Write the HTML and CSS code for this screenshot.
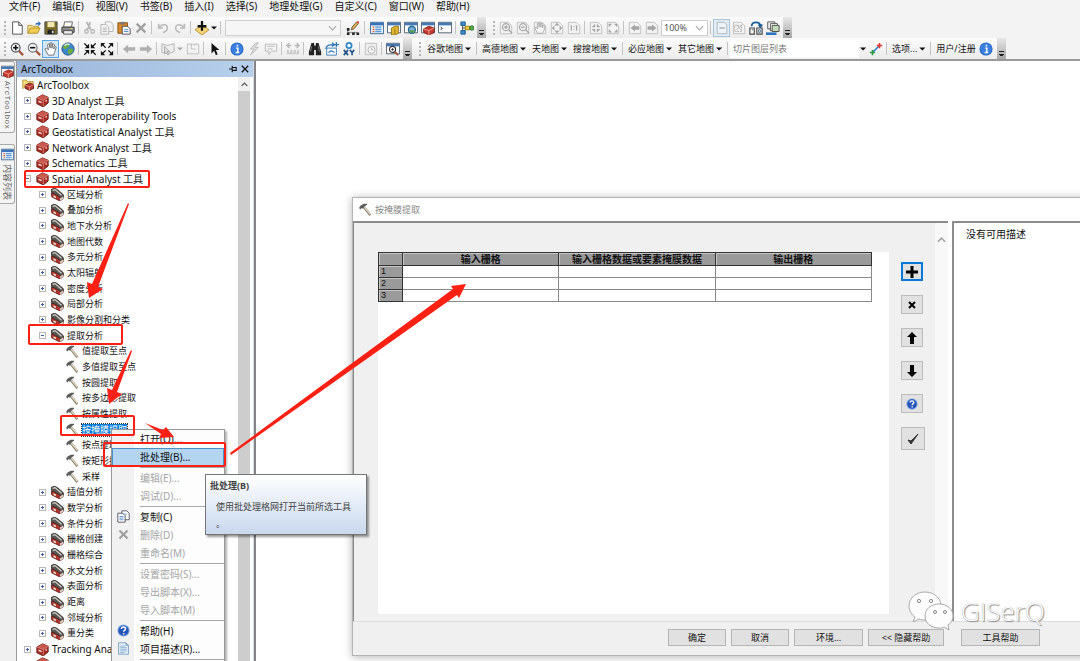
FILE: index.html
```html
<!DOCTYPE html>
<html lang="zh-CN">
<head>
<meta charset="utf-8">
<title>ArcMap</title>
<link rel="stylesheet" href="styles.css">
</head>
<body>
<svg class="defs" aria-hidden="true">
  <defs>
    <symbol id="i-new" viewBox="0 0 16 16"><path d="M3 1h7l4 4v10H3z" fill="#fff" stroke="#444"/><path d="M10 1v4h4" fill="#ddd" stroke="#444"/></symbol>
    <symbol id="i-open" viewBox="0 0 16 16"><path d="M1 14V5h5l1 1h6v3" fill="#f7e29a" stroke="#b08a1e"/><path d="M1 14l3-6h11l-3 6z" fill="#f2cc55" stroke="#b08a1e"/><path d="M9 4c1-2 3-2 4-2V0l3 3-3 3V4z" fill="#2f6fb8"/></symbol>
    <symbol id="i-save" viewBox="0 0 16 16"><path d="M1 1h14v14H1z" fill="#7a6c28" stroke="#444"/><path d="M4 1h8v6H4z" fill="#f0e7b0"/><path d="M4 10h8v5H4z" fill="#222"/><path d="M9 11h2v3H9z" fill="#ddd"/></symbol>
    <symbol id="i-print" viewBox="0 0 16 16"><path d="M4 1h9l-1 6H3z" fill="#fff" stroke="#555"/><path d="M1 7h14v6H1z" fill="#8d8d8d" stroke="#333"/><path d="M3 11h10v4H3z" fill="#eee" stroke="#444"/><path d="M11 8h2v1h-2z" fill="#ff4"/></symbol>
    <symbol id="i-cut" viewBox="0 0 16 16"><path d="M4 1l5 9M8 1L7 7 4 10" fill="none" stroke="#b5b5b5" stroke-width="2"/><circle cx="4" cy="12" r="2" fill="none" stroke="#b5b5b5" stroke-width="1.5"/><circle cx="11" cy="12" r="2" fill="none" stroke="#b5b5b5" stroke-width="1.5"/></symbol>
    <symbol id="i-copy" viewBox="0 0 16 16"><path d="M6 1h6l3 3v8H6z" fill="#f4f4f4" stroke="#b0b0b0"/><path d="M1 4h6l3 3v8H1z" fill="#f4f4f4" stroke="#b0b0b0"/><path d="M3 8h5M3 10h5M3 12h5" stroke="#b5b5b5"/></symbol>
    <symbol id="i-copyc" viewBox="0 0 16 16"><path d="M6 1h6l3 3v8H6z" fill="#fff" stroke="#445"/><path d="M1 4h6l3 3v8H1z" fill="#fff" stroke="#445"/><path d="M3 8h5M3 10h5M3 12h5M8 5h4" stroke="#4b86c4"/></symbol>
    <symbol id="i-paste" viewBox="0 0 16 16"><path d="M1 2h11v12H1z" fill="#d98b2b" stroke="#7a4b12"/><path d="M4 1h5v3H4z" fill="#777"/><path d="M6 6h6l3 3v6H6z" fill="#fff" stroke="#445"/><path d="M8 10h5M8 12h5" stroke="#4b86c4"/></symbol>
    <symbol id="i-x" viewBox="0 0 16 16"><path d="M3 3l10 10M13 3L3 13" stroke="#9f9f9f" stroke-width="2.6"/></symbol>
    <symbol id="i-undo" viewBox="0 0 16 16"><path d="M3 3v5h5M3 8c3-5 10-5 10 0 0 3-3 5-5 5" fill="none" stroke="#bbb" stroke-width="1.8"/></symbol>
    <symbol id="i-redo" viewBox="0 0 16 16"><path d="M13 3v5H8M13 8C10 3 3 3 3 8c0 3 3 5 5 5" fill="none" stroke="#bbb" stroke-width="1.8"/></symbol>
    <symbol id="i-add" viewBox="0 0 16 16"><path d="M8 5l8 5-8 6-8-6z" fill="#f6d57a" stroke="#b78a2c"/><path d="M8 0v11M3 6h10" stroke="#111" stroke-width="2.6"/></symbol>
    <symbol id="i-edit" viewBox="0 0 16 16"><path d="M2 9v4h11" fill="none" stroke="#777"/><path d="M1 8h3v3H1zM1 13h3v3H1zM7 13h3v3H7zM12 13h3v3h-3z" fill="#222"/><path d="M6 10l1-3 5-6 2 2-5 6z" fill="#e9b052" stroke="#553"/><path d="M12 1l2 2 1-2-1-1z" fill="#d33"/></symbol>
    <symbol id="w-frame" viewBox="0 0 16 16"><path d="M.5 1.500h15v12H.5z" fill="#fff" stroke="#456"/><path d="M1 2h14v3H1z" fill="#4479b8"/></symbol>
    <symbol id="i-toc" viewBox="0 0 16 16"><path d="M.5 1.500h15v13H.5z" fill="#e6f1fb" stroke="#2c5c90"/><path d="M1 2h14v3H1z" fill="#3b74b8"/><path d="M3 7h2M3 9.500h2M3 12h2" stroke="#e06030" stroke-width="1.500"/><path d="M6 7h7M6 9.500h7M6 12h7" stroke="#5b9ad6" stroke-width="1.500"/></symbol>
    <symbol id="i-cat" viewBox="0 0 16 16"><use href="#w-frame"/><path d="M5 8l4-2h4v8l-4 2H5z" fill="#e2b834" stroke="#8a6a10"/><path d="M9 9v6" stroke="#8a6a10"/></symbol>
    <symbol id="i-search" viewBox="0 0 16 16"><use href="#w-frame"/><circle cx="9" cy="10" r="4" fill="#6fb0dc" stroke="#2b658e" stroke-width="1.500"/><path d="M6 11c2-2 4 1 6-1v3H7z" fill="#5c9c48"/></symbol>
    <symbol id="i-tbwin" viewBox="0 0 16 16"><use href="#w-frame"/><path d="M3 9l6-3 6 2v5l-6 3-6-3z" fill="#c9382d" stroke="#7c1d16"/><path d="M3 9l6 2 6-3M9 11v5" stroke="#f0a79e" fill="none"/></symbol>
    <symbol id="i-py" viewBox="0 0 16 16"><use href="#w-frame"/><path d="M3 7l2 1.500L3 10" fill="none" stroke="#111"/></symbol>
    <symbol id="i-model" viewBox="0 0 16 16"><path d="M3 3v10M3 8h10M3 3l5 5M3 13l5-5" stroke="#444" fill="none"/><path d="M1 1h5v4H1zM1 11h5v4H1z" fill="#3d8fd4" stroke="#1d5585"/><path d="M6 6h5v4H6z" fill="#f1d33c" stroke="#8d7612"/><circle cx="13.500" cy="8" r="2.500" fill="#57ad4a" stroke="#286a1e"/></symbol>
    <symbol id="g-page" viewBox="0 0 16 16"><path d="M1.500 1.500h9l4 4v9h-13z" fill="#f3f3f3" stroke="#bdbdbd"/></symbol>
    <symbol id="i-gzin" viewBox="0 0 16 16"><use href="#g-page"/><circle cx="8" cy="7" r="4" fill="#eee" stroke="#aaa" stroke-width="1.500"/><path d="M6 7h4M8 5v4M11 10l4 4" stroke="#a5a5a5" stroke-width="1.500"/></symbol>
    <symbol id="i-gzout" viewBox="0 0 16 16"><use href="#g-page"/><circle cx="8" cy="7" r="4" fill="#eee" stroke="#aaa" stroke-width="1.500"/><path d="M6 7h4M11 10l4 4" stroke="#a5a5a5" stroke-width="1.500"/></symbol>
    <symbol id="i-ghand" viewBox="0 0 16 16"><use href="#g-page"/><path d="M5 14L2 8l2-1 1 2V3h2v4-5h2v5-4h2v5-3h2v5l-2 4z" fill="#f4f4f4" stroke="#aaa"/></symbol>
    <symbol id="i-gfull" viewBox="0 0 16 16"><use href="#g-page"/><path d="M8 2l3 3H5zM8 14l3-3H5zM2 8l3-3v6zM14 8l-3-3v6z" fill="#a5a5a5"/></symbol>
    <symbol id="i-gone" viewBox="0 0 16 16"><use href="#g-page"/><path d="M5 5v6M11 5v6M8 6v1M8 9v1M4 6l1-1M10 6l1-1" stroke="#a5a5a5" stroke-width="1.300"/></symbol>
    <symbol id="i-gin" viewBox="0 0 16 16"><use href="#g-page"/><path d="M7 3v4H3zM9 3v4h4zM7 13V9H3zM9 13V9h4z" fill="#a5a5a5"/></symbol>
    <symbol id="i-gout" viewBox="0 0 16 16"><use href="#g-page"/><path d="M3 3h4L3 7zM13 3H9l4 4zM3 13h4L3 9zM13 13H9l4-4z" fill="#a5a5a5"/></symbol>
    <symbol id="i-gback" viewBox="0 0 16 16"><use href="#g-page"/><path d="M3 8l5-4v2h5v4H8v2z" fill="#a5a5a5"/></symbol>
    <symbol id="i-gfwd" viewBox="0 0 16 16"><use href="#g-page"/><path d="M13 8L8 4v2H3v4h5v2z" fill="#a5a5a5"/></symbol>
    <symbol id="i-gdraft" viewBox="0 0 16 16"><path d="M2.500 1.500h8l3 3v10h-11z" fill="#eef3f7" stroke="#a9b4bd"/><path d="M5 8h6" stroke="#a0a8ae" stroke-width="1.500"/></symbol>
    <symbol id="i-gfocus" viewBox="0 0 16 16"><use href="#g-page"/><path d="M3 5h8v7H3z" fill="none" stroke="#aaa" stroke-dasharray="2 1"/><path d="M5 10l7-6M5 4l6 7" stroke="#b5b5b5"/></symbol>
    <symbol id="i-change" viewBox="0 0 16 16"><path d="M3 6c0-6 10-6 10 0M11 4l2 3 2-3" fill="none" stroke="#1f6099" stroke-width="2"/><path d="M1 8h5v7H1zM9 8h6v7H9z" fill="#fff" stroke="#444" stroke-width="1.300"/><path d="M3 10h2M11 10h2v3h-2z" stroke="#468" fill="none"/></symbol>
    <symbol id="i-ddp" viewBox="0 0 16 16"><path d="M2 1h8v8H2z" fill="#fff" stroke="#444"/><path d="M5 3h8v8H5z" fill="#fff" stroke="#444"/><path d="M7 5h8v7H7z" fill="#c3dcb8" stroke="#444"/><path d="M0 13h12v3H0z" fill="#2d74c0"/></symbol>
    <symbol id="i-zin" viewBox="0 0 16 16"><path d="M10 10l5 5" stroke="#a4503c" stroke-width="2.500"/><circle cx="6.500" cy="6.500" r="5" fill="#eef4fa" stroke="#555" stroke-width="1.300"/><path d="M3.500 6.500h6M6.500 3.500v6" stroke="#111" stroke-width="1.800"/></symbol>
    <symbol id="i-zout" viewBox="0 0 16 16"><path d="M10 10l5 5" stroke="#a4503c" stroke-width="2.500"/><circle cx="6.500" cy="6.500" r="5" fill="#eef4fa" stroke="#777" stroke-width="1.300"/><path d="M3.500 6.500h6" stroke="#111" stroke-width="1.800"/></symbol>
    <symbol id="i-hand" viewBox="0 0 16 16"><path d="M5 15L1 8l2-1 2 2-1-6 2-1 1 5V1h2v6l1-5 2 1-1 5 2-3 1 1-2 6-1 3z" fill="#fff" stroke="#666"/></symbol>
    <symbol id="i-globe" viewBox="0 0 16 16"><circle cx="8" cy="8" r="7" fill="#3a87cd" stroke="#224f80"/><path d="M5 2c4-1 6 1 4 3S6 6 6 8 3 7 2 6zM9 8c3-1 5 0 5 1-1 3-3 5-5 5-1-2-2-5 0-6z" fill="#6fae3e"/><path d="M4 4c2-2 5-2 6-1" stroke="#dceefa" fill="none" stroke-width="1.500"/></symbol>
    <symbol id="i-fin" viewBox="0 0 16 16"><path d="M7 7H2l2-2-3-3 1-1 3 3 2-2zM9 7h5l-2-2 3-3-1-1-3 3-2-2zM7 9H2l2 2-3 3 1 1 3-3 2 2zM9 9h5l-2 2 3 3-1 1-3-3-2 2z" fill="#111"/></symbol>
    <symbol id="i-fout" viewBox="0 0 16 16"><path d="M1 1h5L4 3l3 3-1 1-3-3-2 2zM15 1h-5l2 2-3 3 1 1 3-3 2 2zM1 15h5l-2-2 3-3-1-1-3 3-2-2zM15 15h-5l2-2-3-3 1-1 3 3 2-2z" fill="#111"/></symbol>
    <symbol id="i-back" viewBox="0 0 16 16"><path d="M1 8l6-5v3h8v4H7v3z" fill="#b0b0b0"/></symbol>
    <symbol id="i-fwd" viewBox="0 0 16 16"><path d="M15 8L9 3v3H1v4h8v3z" fill="#b0b0b0"/></symbol>
    <symbol id="i-selfeat" viewBox="0 0 16 16"><path d="M1 2l6 2 8-2v9l-6 2-8-1z" fill="#eee" stroke="#b0b0b0"/><path d="M4 5v9l2-2 2 3 1-1-2-3h3z" fill="#ddd" stroke="#aaa"/></symbol>
    <symbol id="i-clear" viewBox="0 0 16 16"><path d="M1.500 2.500h13v11h-13z" fill="#f2f2f2" stroke="#bbb"/><path d="M6 2v6h5M9 4l3-2" stroke="#bbb" fill="none"/></symbol>
    <symbol id="i-arrow" viewBox="0 0 16 16"><path d="M4 1v12l3-3 2 5 2-1-2-5h4z" fill="#111"/></symbol>
    <symbol id="i-info" viewBox="0 0 16 16"><circle cx="8" cy="8" r="7.500" fill="#2568c8"/><circle cx="8" cy="8" r="6.500" fill="#3b7fe0"/><path d="M7 7h2v5M6.500 12h4M8.500 3v2" stroke="#fff" stroke-width="1.600" fill="none"/></symbol>
    <symbol id="i-bolt" viewBox="0 0 16 16"><path d="M10 1L4 8h4l-4 7 9-9H9l4-5z" fill="#ddd" stroke="#b8b8b8"/></symbol>
    <symbol id="i-popup" viewBox="0 0 16 16"><path d="M1.500 2.500h13v8h-6l-3 4v-4h-4z" fill="#f4f4f4" stroke="#b5b5b5"/><path d="M4 5h8M4 8h6" stroke="#b5b5b5"/></symbol>
    <symbol id="i-measure" viewBox="0 0 16 16"><path d="M1 4h5M10 4h5M4 1L1 4l3 3M12 1l3 3-3 3" stroke="#b5b5b5" stroke-width="1.500" fill="none"/><path d="M1 9h14v5H1z" fill="#ccc"/><path d="M4 9v3M8 9v3M12 9v3" stroke="#fff"/></symbol>
    <symbol id="i-binoc" viewBox="0 0 16 16"><path d="M4 1h3v3h2V1h3l3 10v4H9V9H7v6H1v-4z" fill="#222"/><path d="M4 5l-1 6M12 5l1 6" stroke="#888"/></symbol>
    <symbol id="i-route" viewBox="0 0 16 16"><path d="M2 7h11v8H2z" fill="#fff" stroke="#2f78b5"/><path d="M4 12l3-2 4 2M1 8c0-4 4-5 8-5M8 1l3 2-3 2M13 0v6M11 3h5" stroke="#2f78b5" fill="none" stroke-width="1.400"/></symbol>
    <symbol id="i-xy" viewBox="0 0 16 16"><circle cx="8" cy="4" r="3" fill="#fff" stroke="#2f88c5" stroke-width="2"/><path d="M2 9l5 6M7 9l-5 6M9 9l2.500 3L14 9M11.500 12v3" stroke="#1d4f85" fill="none" stroke-width="1.800"/></symbol>
    <symbol id="i-time" viewBox="0 0 16 16"><path d="M1.500 1.500h13v13h-13z" fill="#eee" stroke="#bbb"/><circle cx="8.500" cy="9" r="4" fill="#f7f7f7" stroke="#b0b0b0"/><path d="M8.500 6.500V9h2" stroke="#aaa" fill="none"/></symbol>
    <symbol id="i-viewer" viewBox="0 0 16 16"><use href="#w-frame"/><circle cx="7.500" cy="8.500" r="3.500" fill="#fff" stroke="#333" stroke-width="1.300"/><path d="M6 8.500h3M7.500 7v3" stroke="#222"/><path d="M10 11l4 4" stroke="#a4503c" stroke-width="2"/></symbol>
    <symbol id="i-link" viewBox="0 0 16 16"><path d="M4 12l8-8" stroke="#2f7fd0" stroke-width="1.800"/><path d="M1 12h6M4 9v6" stroke="#2a9b3c" stroke-width="1.800"/><path d="M9 4h6M12 1v6" stroke="#e8352b" stroke-width="1.800"/></symbol>
    <symbol id="i-root" viewBox="0 0 16 16"><path d="M1 14V2h5l1 2h8v3" fill="#f6dc7c" stroke="#a98a2b"/><path d="M4 9l6-3 6 2v5l-6 3-6-3z" fill="#b3352b" stroke="#5c1812"/><path d="M4 9l6 2 6-3M10 11v5" stroke="#eba49c" fill="none"/></symbol>
    <symbol id="i-box" viewBox="0 0 16 16"><path d="M1 5l7-4 7 3v7l-6 5-8-4z" fill="#a92a22" stroke="#5d1712"/><path d="M1 5l7-4 7 3-6 4z" fill="#c9574c"/><path d="M1 5l8 3 6-4M9 8v7" fill="none" stroke="#d88a80"/><path d="M3 8l4 1.500v2L3 10z" fill="#f0d8d4"/><path d="M11 9l2-1.500v2" stroke="#f0d8d4" fill="none"/></symbol>
    <symbol id="i-set" viewBox="0 0 16 16"><path d="M0 7l1 4 10 5 4-3V9L6 4z" fill="#b3322a" stroke="#5a1a14"/><path d="M0 2l4-2 4 2 7 6v3l-3 1-6-4-5-2z" fill="#5a5652" stroke="#2b2826"/><path d="M2 3l3-1 8 7" stroke="#d4cfc9" stroke-width="1.500" fill="none"/><path d="M3 9l3 1.500v2L3 11z" fill="#eed"/><path d="M11 13v3l4-3v-3z" fill="#d7d0c8"/></symbol>
    <symbol id="i-hammer" viewBox="0 0 16 16"><path d="M6 5l8 10" stroke="#8d806a" stroke-width="3.200"/><path d="M6.500 5l7.500 9" stroke="#e4dac6" stroke-width="1.600"/><path d="M0 6l2-3 4-2h4v1L7 4 5 7 3 6 2 8z" fill="#5c5c5c"/></symbol>
    <symbol id="i-help" viewBox="0 0 16 16"><circle cx="8" cy="8" r="7.500" fill="#7ea6e0"/><circle cx="8" cy="8" r="6.300" fill="#2355b8"/><path d="M5.500 6c0-3 5-3 5 0 0 1.500-2.300 1.500-2.300 3.500M8.200 11v1.800" stroke="#fff" stroke-width="1.800" fill="none"/></symbol>
    <symbol id="i-desc" viewBox="0 0 16 16"><path d="M2 1h9l3 3v11H2z" fill="#e8f2fb" stroke="#6890b5"/><path d="M11 1v3h3" fill="none" stroke="#6890b5"/><path d="M4 5h6M4 7h8M4 9h8M4 11h8M4 13h5" stroke="#7aa7d0"/></symbol>
    <symbol id="i-chev" viewBox="0 0 10 6"><path d="M1 1l4 4 4-4" fill="none" stroke="#aaa" stroke-width="1.300"/></symbol>
    <symbol id="i-up" viewBox="0 0 10 6"><path d="M1 5l4-4 4 4" fill="none" stroke="#555" stroke-width="1.800"/></symbol>
    <symbol id="i-pin" viewBox="0 0 10 10"><path d="M0 5h4M4 1v8M4 3h5v4H4" fill="none" stroke="#111" stroke-width="1.300"/><path d="M4 6h5v1.500H4z" fill="#111"/></symbol>
    <symbol id="i-close" viewBox="0 0 10 10"><path d="M1 1l8 8M9 1L1 9" stroke="#111" stroke-width="1.600"/></symbol>
  </defs>
</svg>

<header class="chrome">
  <nav class="menubar" aria-label="主菜单">
    <button>文件(F)</button><button>编辑(E)</button><button>视图(V)</button><button>书签(B)</button><button>插入(I)</button><button>选择(S)</button><button>地理处理(G)</button><button>自定义(C)</button><button>窗口(W)</button><button>帮助(H)</button>
  </nav>
  <div class="row">
    <div class="bar" role="toolbar" aria-label="标准">
      <i class="grip"></i>
      <button class="tb" aria-label="新建"><svg><use href="#i-new"/></svg></button>
      <button class="tb" aria-label="打开"><svg><use href="#i-open"/></svg></button>
      <button class="tb" aria-label="保存"><svg><use href="#i-save"/></svg></button>
      <button class="tb" aria-label="打印"><svg><use href="#i-print"/></svg></button>
      <i class="sep"></i>
      <button class="tb" aria-label="剪切"><svg><use href="#i-cut"/></svg></button>
      <button class="tb" aria-label="复制"><svg><use href="#i-copy"/></svg></button>
      <button class="tb" aria-label="粘贴"><svg><use href="#i-paste"/></svg></button>
      <button class="tb" aria-label="删除"><svg><use href="#i-x"/></svg></button>
      <i class="sep"></i>
      <button class="tb" aria-label="撤销"><svg><use href="#i-undo"/></svg></button>
      <button class="tb" aria-label="恢复"><svg><use href="#i-redo"/></svg></button>
      <i class="sep"></i>
      <button class="tb" aria-label="添加数据"><svg><use href="#i-add"/></svg></button>
      <button class="drop" aria-label="添加数据选项"></button>
      <i class="sep"></i>
      <span class="combo scale"><select aria-label="比例尺" disabled><option></option></select><svg><use href="#i-chev"/></svg></span>
      <button class="tb" aria-label="编辑器"><svg><use href="#i-edit"/></svg></button>
      <i class="sep wide"></i>
      <button class="tb" aria-label="内容列表"><svg><use href="#i-toc"/></svg></button>
      <button class="tb" aria-label="目录"><svg><use href="#i-cat"/></svg></button>
      <button class="tb" aria-label="搜索"><svg><use href="#i-search"/></svg></button>
      <button class="tb" aria-label="工具箱"><svg><use href="#i-tbwin"/></svg></button>
      <button class="tb" aria-label="Python"><svg><use href="#i-py"/></svg></button>
      <i class="sep"></i>
      <button class="tb" aria-label="模型构建器"><svg><use href="#i-model"/></svg></button>
      <button class="more" aria-label="工具条选项"></button>
    </div>
    <div class="bar layout" role="toolbar" aria-label="布局">
      <i class="grip"></i>
      <button class="tb" aria-label="放大"><svg><use href="#i-gzin"/></svg></button>
      <button class="tb" aria-label="缩小"><svg><use href="#i-gzout"/></svg></button>
      <button class="tb" aria-label="平移"><svg><use href="#i-ghand"/></svg></button>
      <button class="tb" aria-label="缩放整个页面"><svg><use href="#i-gfull"/></svg></button>
      <button class="tb" aria-label="1:1"><svg><use href="#i-gone"/></svg></button>
      <i class="sep"></i>
      <button class="tb" aria-label="固定放大"><svg><use href="#i-gin"/></svg></button>
      <button class="tb" aria-label="固定缩小"><svg><use href="#i-gout"/></svg></button>
      <i class="sep"></i>
      <button class="tb" aria-label="后退"><svg><use href="#i-gback"/></svg></button>
      <button class="tb" aria-label="前进"><svg><use href="#i-gfwd"/></svg></button>
      <span class="combo percent"><select aria-label="缩放"><option>100%</option></select><svg><use href="#i-chev"/></svg></span>
      <i class="sep"></i>
      <button class="tb on pale" aria-label="草稿"><svg><use href="#i-gdraft"/></svg></button>
      <button class="tb" aria-label="焦点"><svg><use href="#i-gfocus"/></svg></button>
      <button class="tb" aria-label="更改布局"><svg><use href="#i-change"/></svg></button>
      <button class="tb" aria-label="数据驱动页面"><svg><use href="#i-ddp"/></svg></button>
      <button class="more" aria-label="工具条选项"></button>
    </div>
  </div>
  <div class="row">
    <div class="bar" role="toolbar" aria-label="工具">
      <i class="grip"></i>
      <button class="tb" aria-label="放大"><svg><use href="#i-zin"/></svg></button>
      <button class="tb" aria-label="缩小"><svg><use href="#i-zout"/></svg></button>
      <button class="tb on" aria-label="平移"><svg><use href="#i-hand"/></svg></button>
      <button class="tb" aria-label="全图"><svg><use href="#i-globe"/></svg></button>
      <i class="sep"></i>
      <button class="tb" aria-label="固定放大"><svg><use href="#i-fin"/></svg></button>
      <button class="tb" aria-label="固定缩小"><svg><use href="#i-fout"/></svg></button>
      <i class="sep"></i>
      <button class="tb" aria-label="返回"><svg><use href="#i-back"/></svg></button>
      <button class="tb" aria-label="前进"><svg><use href="#i-fwd"/></svg></button>
      <i class="sep"></i>
      <button class="tb" aria-label="选择要素"><svg><use href="#i-selfeat"/></svg></button>
      <button class="drop dim" aria-label="选择方式"></button>
      <button class="tb" aria-label="清除选择"><svg><use href="#i-clear"/></svg></button>
      <i class="sep"></i>
      <button class="tb" aria-label="选择元素"><svg><use href="#i-arrow"/></svg></button>
      <i class="sep"></i>
      <button class="tb" aria-label="识别"><svg><use href="#i-info"/></svg></button>
      <button class="tb" aria-label="超链接"><svg><use href="#i-bolt"/></svg></button>
      <button class="tb" aria-label="弹出窗口"><svg><use href="#i-popup"/></svg></button>
      <i class="sep"></i>
      <button class="tb" aria-label="测量"><svg><use href="#i-measure"/></svg></button>
      <i class="sep"></i>
      <button class="tb" aria-label="查找"><svg><use href="#i-binoc"/></svg></button>
      <button class="tb" aria-label="查找路径"><svg><use href="#i-route"/></svg></button>
      <button class="tb" aria-label="转到 XY"><svg><use href="#i-xy"/></svg></button>
      <i class="sep"></i>
      <button class="tb" aria-label="时间滑块"><svg><use href="#i-time"/></svg></button>
      <i class="sep"></i>
      <button class="tb" aria-label="查看器"><svg><use href="#i-viewer"/></svg></button>
      <button class="more" aria-label="工具条选项"></button>
    </div>
    <div class="bar maps" role="toolbar" aria-label="在线地图">
      <i class="grip"></i>
      <button class="txt">谷歌地图</button><i class="sep"></i>
      <button class="txt">高德地图</button><button class="txt">天地图</button><button class="txt">搜搜地图</button><i class="sep"></i>
      <button class="txt">必应地图</button><button class="txt">其它地图</button><i class="sep"></i>
      <select class="layers" aria-label="切片图层"><option>切片图层列表</option></select>
      <button class="drop" aria-label="展开列表"></button>
      <button class="tb" aria-label="连接"><svg><use href="#i-link"/></svg></button>
      <i class="sep"></i>
      <button class="txt">选项...</button><i class="sep"></i>
      <button class="txt plain">用户/注册</button>
      <button class="tb" aria-label="关于"><svg><use href="#i-info"/></svg></button>
      <button class="more" aria-label="工具条选项"></button>
    </div>
  </div>
</header>

<main class="work">
  <aside class="dock">
    <button class="tab"><svg><use href="#i-tbwin"/></svg><span class="mono">ArcToolbox</span></button>
    <button class="tab"><svg><use href="#i-toc"/></svg><span>内容列表</span></button>
  </aside>

  <section class="panel" aria-label="ArcToolbox">
    <div class="panel-head"><h2>ArcToolbox</h2><button aria-label="自动隐藏"><svg><use href="#i-pin"/></svg></button><button aria-label="关闭"><svg><use href="#i-close"/></svg></button></div>
    <div class="panel-body">
      <ul class="tree" role="tree">
        <li class="l1"><svg><use href="#i-root"/></svg><span>ArcToolbox</span></li>
        <li class="l2"><button class="exp" aria-label="展开"></button><svg><use href="#i-box"/></svg><span>3D Analyst 工具</span></li>
        <li class="l2"><button class="exp" aria-label="展开"></button><svg><use href="#i-box"/></svg><span>Data Interoperability Tools</span></li>
        <li class="l2"><button class="exp" aria-label="展开"></button><svg><use href="#i-box"/></svg><span>Geostatistical Analyst 工具</span></li>
        <li class="l2"><button class="exp" aria-label="展开"></button><svg><use href="#i-box"/></svg><span>Network Analyst 工具</span></li>
        <li class="l2"><button class="exp" aria-label="展开"></button><svg><use href="#i-box"/></svg><span>Schematics 工具</span></li>
        <li class="l2"><button class="exp open" aria-label="折叠"></button><svg><use href="#i-box"/></svg><span>Spatial Analyst 工具</span></li>
        <li class="l3"><button class="exp" aria-label="展开"></button><svg><use href="#i-set"/></svg><span>区域分析</span></li>
        <li class="l3"><button class="exp" aria-label="展开"></button><svg><use href="#i-set"/></svg><span>叠加分析</span></li>
        <li class="l3"><button class="exp" aria-label="展开"></button><svg><use href="#i-set"/></svg><span>地下水分析</span></li>
        <li class="l3"><button class="exp" aria-label="展开"></button><svg><use href="#i-set"/></svg><span>地图代数</span></li>
        <li class="l3"><button class="exp" aria-label="展开"></button><svg><use href="#i-set"/></svg><span>多元分析</span></li>
        <li class="l3"><button class="exp" aria-label="展开"></button><svg><use href="#i-set"/></svg><span>太阳辐射</span></li>
        <li class="l3"><button class="exp" aria-label="展开"></button><svg><use href="#i-set"/></svg><span>密度分析</span></li>
        <li class="l3"><button class="exp" aria-label="展开"></button><svg><use href="#i-set"/></svg><span>局部分析</span></li>
        <li class="l3"><button class="exp" aria-label="展开"></button><svg><use href="#i-set"/></svg><span>影像分割和分类</span></li>
        <li class="l3"><button class="exp open" aria-label="折叠"></button><svg><use href="#i-set"/></svg><span>提取分析</span></li>
        <li class="l4"><svg><use href="#i-hammer"/></svg><span>值提取至点</span></li>
        <li class="l4"><svg><use href="#i-hammer"/></svg><span>多值提取至点</span></li>
        <li class="l4"><svg><use href="#i-hammer"/></svg><span>按圆提取</span></li>
        <li class="l4"><svg><use href="#i-hammer"/></svg><span>按多边形提取</span></li>
        <li class="l4"><svg><use href="#i-hammer"/></svg><span>按属性提取</span></li>
        <li class="l4 selected"><svg><use href="#i-hammer"/></svg><span>按掩膜提取</span></li>
        <li class="l4"><svg><use href="#i-hammer"/></svg><span>按点提取</span></li>
        <li class="l4"><svg><use href="#i-hammer"/></svg><span>按矩形提取</span></li>
        <li class="l4"><svg><use href="#i-hammer"/></svg><span>采样</span></li>
        <li class="l3"><button class="exp" aria-label="展开"></button><svg><use href="#i-set"/></svg><span>插值分析</span></li>
        <li class="l3"><button class="exp" aria-label="展开"></button><svg><use href="#i-set"/></svg><span>数学分析</span></li>
        <li class="l3"><button class="exp" aria-label="展开"></button><svg><use href="#i-set"/></svg><span>条件分析</span></li>
        <li class="l3"><button class="exp" aria-label="展开"></button><svg><use href="#i-set"/></svg><span>栅格创建</span></li>
        <li class="l3"><button class="exp" aria-label="展开"></button><svg><use href="#i-set"/></svg><span>栅格综合</span></li>
        <li class="l3"><button class="exp" aria-label="展开"></button><svg><use href="#i-set"/></svg><span>水文分析</span></li>
        <li class="l3"><button class="exp" aria-label="展开"></button><svg><use href="#i-set"/></svg><span>表面分析</span></li>
        <li class="l3"><button class="exp" aria-label="展开"></button><svg><use href="#i-set"/></svg><span>距离</span></li>
        <li class="l3"><button class="exp" aria-label="展开"></button><svg><use href="#i-set"/></svg><span>邻域分析</span></li>
        <li class="l3"><button class="exp" aria-label="展开"></button><svg><use href="#i-set"/></svg><span>重分类</span></li>
        <li class="l2"><button class="exp" aria-label="展开"></button><svg><use href="#i-box"/></svg><span>Tracking Analyst</span></li>
        <li class="l2 cut"><svg><use href="#i-box"/></svg></li>
      </ul>
      <div class="vscroll"><button aria-label="向上滚动"><svg><use href="#i-up"/></svg></button></div>
    </div>
  </section>
  <section class="map" aria-label="地图"></section>
</main>

<section class="dialog" role="dialog" aria-label="按掩膜提取">
  <div class="dialog-head"><svg><use href="#i-hammer"/></svg><h2>按掩膜提取</h2></div>
  <div class="dialog-main">
    <div class="form">
      <div class="sheet">
        <table>
          <colgroup><col class="num"><col><col><col></colgroup>
          <thead><tr><th></th><th>输入栅格</th><th>输入栅格数据或要素掩膜数据</th><th>输出栅格</th></tr></thead>
          <tbody>
            <tr><th>1</th><td></td><td></td><td></td></tr>
            <tr><th>2</th><td></td><td></td><td></td></tr>
            <tr><th>3</th><td></td><td></td><td></td></tr>
          </tbody>
        </table>
      </div>
      <div class="side">
        <button class="focus" aria-label="添加行"><svg viewBox="0 0 12 12"><path d="M6 0v12M0 6h12" stroke="#000" stroke-width="3"/></svg></button>
        <button aria-label="删除行"><svg viewBox="0 0 12 12"><path d="M3 3l6 6M9 3L3 9" stroke="#000" stroke-width="2"/></svg></button>
        <button aria-label="上移"><svg viewBox="0 0 12 12"><path d="M6 0l5 5H8v7H4V5H1z"/></svg></button>
        <button aria-label="下移"><svg viewBox="0 0 12 12"><path d="M6 12l5-5H8V0H4v7H1z"/></svg></button>
        <button aria-label="帮助"><svg><use href="#i-help"/></svg></button>
        <button class="big" aria-label="检查"><svg viewBox="0 0 12 12"><path d="M1 7l3 4 7-10-7 7z" fill="#333" stroke="#333"/></svg></button>
      </div>
      <div class="form-scroll"><svg><use href="#i-up"/></svg></div>
    </div>
    <div class="help-pane"><p>没有可用描述</p></div>
  </div>
  <div class="dialog-foot">
    <button class="w58">确定</button><button class="w58">取消</button><button class="w70">环境...</button><button class="w76">&lt;&lt; 隐藏帮助</button><button class="tool">工具帮助</button>
  </div>
</section>

<div class="context" role="menu">
  <button>打开(O)...</button>
  <button class="hot">批处理(B)...</button>
  <hr>
  <button disabled>编辑(E)...</button>
  <button disabled>调试(D)...</button>
  <hr>
  <button><svg><use href="#i-copyc"/></svg>复制(C)</button>
  <button disabled><svg><use href="#i-x"/></svg>删除(D)</button>
  <button disabled>重命名(M)</button>
  <hr>
  <button disabled>设置密码(S)...</button>
  <button disabled>导出脚本(X)...</button>
  <button disabled>导入脚本(M)</button>
  <hr>
  <button><svg><use href="#i-help"/></svg>帮助(H)</button>
  <button><svg><use href="#i-desc"/></svg>项目描述(R)...</button>
  <hr>
</div>

<div class="tip" role="tooltip"><strong>批处理(B)</strong><p>使用批处理格网打开当前所选工具<br>。</p></div>

<svg class="marks" aria-hidden="true">
  <g fill="none" stroke="#ff2014" stroke-width="2">
    <rect x="25" y="171" width="124" height="16" rx="1"/>
    <rect x="29" y="325" width="93" height="19" rx="1"/>
    <rect x="61" y="416" width="73" height="19" rx="1"/>
    <rect x="104" y="443" width="121" height="23" rx="1"/>
  </g>
  <g fill="#ff2014">
    <path d="M128 203L92 284l-5-2 2 16 14-9-5-2 31-83z"/>
    <path d="M131 350l-19 40-5-2 2 16 13-10-5-2 15-41z"/>
    <path d="M145 423l18 7 3-3 8 10-15 1 2-4z"/>
    <path d="M230 453L453 289l-2-3 15-2-7 14-2-3L231 455z"/>
  </g>
</svg>

<div class="mark">
  <svg viewBox="0 0 46 40"><g fill="#fdfdfd" stroke="#aaa" stroke-width="1"><path d="M17 1C8 1 1 7 1 15c0 5 3 9 6 11l-2 5 6-3c2 1 4 1 7 1 9 0 15-6 15-14S26 1 17 1z"/><path d="M31 13c-8 0-14 5-14 12s6 12 14 12c2 0 4 0 5-1l5 3-1-5c3-2 5-5 5-9 0-7-6-12-14-12z"/></g><g fill="#fff" stroke="#888"><circle cx="11" cy="10" r="1.600"/><circle cx="23" cy="10" r="1.600"/><circle cx="27" cy="21" r="1.500"/><circle cx="37" cy="21" r="1.500"/></g></svg>
  <span>GISerQ</span>
</div>
</body>
</html>
```
FILE: styles.css
```css
* { box-sizing: border-box; }
html, body { height: 100%; margin: 0; }
body {
  display: flex;
  flex-direction: column;
  position: relative;
  overflow: hidden;
  background: #f0f0f0;
  color: #111;
  font: 9px/12px "Noto Sans", "Noto Sans CJK SC", sans-serif;
}
button, select {
  font: inherit;
  color: inherit;
  margin: 0;
  padding: 0;
  border: 0;
  background: none;
  white-space: nowrap;
}
h2, p { margin: 0; font-size: inherit; font-weight: normal; }
svg { display: block; flex: none; width: 14px; height: 14px; }
.defs { position: absolute; width: 0; height: 0; }

/* menu and toolbars */
.chrome { flex: none; border-bottom: 2px solid #9b9b9b; background: #f3f3f3; }
.menubar { display: flex; gap: 12px; height: 17px; padding-left: 9px; align-items: flex-start; font-size: 10px; }
.row { display: flex; height: 21px; }
.bar {
  display: flex;
  align-items: center;
  padding-left: 4px;
  background: linear-gradient(#fbfbfb, #ececec);
}
.grip {
  width: 2px;
  height: 14px;
  margin-right: 2px;
  background: repeating-linear-gradient(#b5b5b5 0 2px, transparent 2px 4px);
}
.layout { padding-left: 7px; }
.tb { display: grid; place-items: center; width: 17px; height: 18px; }
.tb.on { background: #d5e8f8; border: 1px solid #5aa5e6; }
.tb.pale { background: #e1ebf3; border-color: #a9c3d8; }
.sep { flex: none; width: 1px; height: 13px; margin: 0 2px; background: #c4c4c4; }
.sep.wide { margin: 0 3px; }
.drop, .txt:not(.plain)::after {
  content: "";
  width: 8px;
  height: 8px;
  clip-path: polygon(1px 3px, 7px 3px, 4px 6px);
  background: #111;
}
.drop.dim { background: #aaa; }
.more {
  align-self: stretch;
  width: 9px;
  margin-left: 2px;
  background:
    linear-gradient(#222, #222) center 13px / 5px 1px no-repeat,
    linear-gradient(#222, #222) center 16px / 5px 1px no-repeat,
    linear-gradient(#222, #222) center 17px / 3px 1px no-repeat,
    linear-gradient(#e8e8e8, #a8a8a8);
}
.combo { position: relative; height: 16px; background: #fff; border: 1px solid #cfcfcf; }
.combo select { appearance: none; width: 100%; height: 14px; padding-left: 2px; background: #fff; color: #555; display: block; opacity: 1; }
.combo svg { position: absolute; right: 3px; top: 4px; width: 9px; height: 6px; }
.scale { width: 116px; margin: 0 3px 0 2px; }
.scale select { background: #f6f6f6; }
.percent { width: 47px; margin-left: 1px; }
.maps { padding-left: 7px; }
.maps .grip { margin-right: 3px; }
.txt { display: flex; align-items: center; gap: 1px; margin: 0 2px 0 3px; }
.layers { appearance: none; width: 129px; height: 18px; padding-left: 3px; background: #fff; color: #777; }

/* docked windows */
.work { flex: 1; display: flex; min-height: 0; }
.dock { flex: none; width: 17px; display: flex; flex-direction: column; gap: 11px; border-right: 1px solid #999; }
.tab {
  display: flex;
  flex-direction: column;
  align-items: center;
  gap: 3px;
  width: 15px;
  padding: 3px 0;
  border: 1px solid #a8a8a8;
  border-left: 0;
  border-radius: 0 3px 3px 0;
  background: #f4f4f4;
  color: #666;
}
.tab svg { width: 13px; height: 13px; }
.tab span { writing-mode: vertical-rl; text-orientation: sideways; }
.tab .mono { font-family: "Liberation Mono", monospace; font-size: 8px; }
.panel { flex: none; width: 237px; display: flex; flex-direction: column; border-right: 1px solid #d0dcea; }
.panel-head {
  flex: none;
  display: flex;
  align-items: center;
  gap: 4px;
  height: 16px;
  padding: 0 4px 0 4px;
  background: linear-gradient(90deg, #9ab6da, #b6d0ec);
  font-size: 10px;
}
.panel-head h2 { flex: 1; }
.panel-head svg { width: 8px; height: 8px; }
.panel-body { flex: 1; display: flex; min-height: 0; background: #fff; }
.tree { flex: 1; min-width: 0; display: flex; flex-direction: column; margin: 0; padding: 0; list-style: none; }
.tree li { flex: 1 1 0; min-height: 0; display: flex; align-items: center; white-space: nowrap; }
.tree svg { width: 13px; height: 13px; margin-right: 3px; }
.tree .l1, .tree .l2 { font-size: 10px; }
.tree .l1 { padding-left: 5px; }
.tree .l1 svg { width: 12px; }
.tree .l2 { padding-left: 7px; }
.tree .l3 { padding-left: 22px; }
.tree .l4 { padding-left: 49px; }
.tree .cut { flex: 0 0 4px; padding-left: 19px; align-items: flex-start; overflow: hidden; }
.exp {
  flex: none;
  width: 7px;
  height: 7px;
  margin-right: 5px;
  border: 1px solid #b8b8b8;
  background:
    linear-gradient(#3f5ea8, #3f5ea8) center / 3px 1px no-repeat,
    linear-gradient(#3f5ea8, #3f5ea8) center / 1px 3px no-repeat,
    #fff;
}
.exp.open { background: linear-gradient(#3f5ea8, #3f5ea8) center / 3px 1px no-repeat, #fff; }
.selected span { background: #0078d7; color: #fff; outline: 1px dotted #333; }
.vscroll { flex: none; width: 12px; margin-right: 3px; background: #cdcdcd; }
.vscroll button { display: grid; place-items: center; width: 12px; height: 14px; background: #f0f0f0; }
.vscroll svg { width: 7px; height: 5px; margin: 0; }
.map { flex: 1; border-left: 2px solid #858585; background: #fff; }

/* tool dialog */
.dialog {
  position: absolute;
  left: 352px;
  right: -8px;
  top: 197px;
  bottom: 5px;
  display: flex;
  flex-direction: column;
  border: 1px solid #b5b5b5;
  background: #f0f0f0;
  box-shadow: 0 1px 8px rgba(0, 0, 0, .3);
}
.dialog-head { flex: none; display: flex; align-items: center; gap: 3px; height: 23px; padding-left: 6px; background: #fff; color: #888; }
.dialog-head svg { width: 13px; height: 13px; }
.dialog-main { flex: 1; display: flex; gap: 4px; min-height: 0; background: #fff; }
.form { flex: none; width: 595px; display: flex; border-top: 2px solid #8c8c8c; border-left: 1px solid #8c8c8c; background: #f0f0f0; }
.sheet { flex: 1; margin: 29px 0 7px 24px; background: #fff; }
table { width: 494px; table-layout: fixed; border-collapse: collapse; font-family: "Liberation Sans", "Noto Sans CJK SC", sans-serif; }
.num { width: 24px; }
th, td { height: 12px; padding: 0; border: 1px solid #888; line-height: 11px; }
th { background: #9a9a9a; box-shadow: inset 1px 1px #c4c4c4; border-color: #333; }
thead th { font-size: 10px; font-weight: bold; height: 13px; }
tbody th { padding-left: 2px; text-align: left; font-weight: normal; }
.side { flex: none; width: 46px; padding: 10px 0 0 12px; margin-top: 29px; display: flex; flex-direction: column; gap: 14px; }
.side button { display: grid; place-items: center; width: 22px; height: 19px; border: 1px solid #bcbcbc; background: #e1e1e1; }
.side svg { width: 12px; height: 12px; }
.side .focus { border: 2px solid #0a78d8; }
.side .big { width: 24px; height: 23px; }
.form-scroll { flex: none; width: 13px; padding: 14px 0 0 2px; background: #f8f8f8; }
.form-scroll svg { width: 9px; height: 6px; opacity: .5; }
.help-pane { flex: 1; padding: 5px 12px; border-top: 2px solid #8c8c8c; border-left: 2px solid #8c8c8c; background: #fff; font-size: 10px; }
.dialog-foot { flex: none; display: flex; gap: 5px; height: 34px; padding: 7px 0 0 315px; border-top: 1px solid #ddd; }
.dialog-foot button { height: 17px; border: 1px solid #b5b5b5; background: #e1e1e1; }
.w58 { width: 58px; }
.w70 { width: 69px; }
.w76 { width: 76px; }
.dialog-foot .tool { width: 79px; margin-left: 12px; }

/* context menu and its tooltip */
.context {
  position: absolute;
  left: 111px;
  top: 429px;
  width: 114px;
  height: 240px;
  border: 1px solid #979797;
  background: linear-gradient(90deg, #f1f1f1 22px, #fdfdfd 22px);
  box-shadow: 2px 2px 2px rgba(0, 0, 0, .3);
  font-size: 10px;
}
.context button { position: relative; display: block; width: 100%; height: 18px; padding-left: 28px; text-align: left; }
.context button:disabled { color: #a5a5a5; }
.context .hot { background: #b3d5f2; border: 1px solid #4a90c8; padding-left: 27px; }
.context svg { position: absolute; left: 5px; top: 2px; width: 13px; height: 13px; }
.context hr { height: 1px; margin: 1px 0 1px 28px; border: 0; background: #a8a8a8; }
.tip {
  position: absolute;
  left: 205px;
  top: 474px;
  width: 162px;
  height: 61px;
  padding: 5px 4px;
  border: 1px solid #767676;
  background: linear-gradient(#fff, #c9d8ee);
  box-shadow: 2px 2px 2px rgba(0, 0, 0, .4);
  color: #444;
}
.tip strong { display: block; }
.tip p { padding: 6px 0 0 6px; line-height: 17px; white-space: nowrap; }

/* annotations */
.marks { position: absolute; inset: 0; width: 100%; height: 100%; pointer-events: none; }
.mark { position: absolute; left: 908px; top: 591px; display: flex; align-items: center; gap: 7px; pointer-events: none; }
.mark svg { width: 46px; height: 40px; }
.mark span { font: 300 26px/36px "Open Sans", sans-serif; color: #fff; text-shadow: 1px 1px 1px #888, 0 0 1px #999; }
```
